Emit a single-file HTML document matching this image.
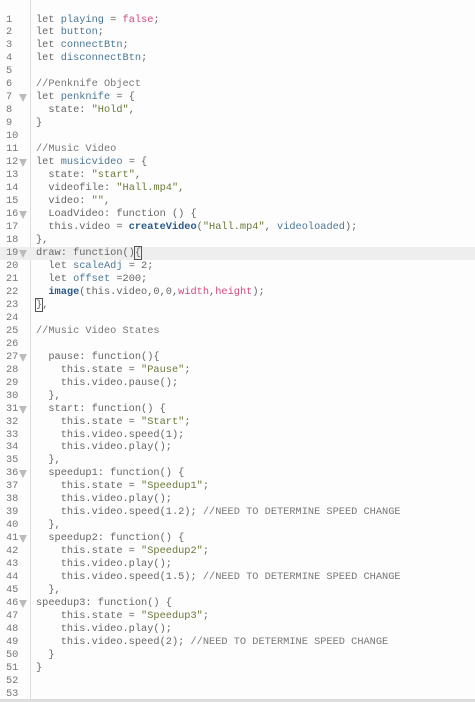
<!DOCTYPE html><html><head><style>
body{margin:0;width:475px;height:702px;overflow:hidden;background:#fdfdfd;font-family:"Liberation Mono",monospace;font-size:10.3px;color:#666;}
#g{position:absolute;left:0;top:0;width:30px;height:699px;border-right:1px solid #ddd;}
#c{position:absolute;top:13.5px;left:0;width:475px}
.l{height:12.98px;line-height:13px;white-space:pre;position:relative}
.n{position:absolute;left:6px;color:#777}
.t{position:absolute;left:36px}
.f{position:absolute;left:19px;top:3px;width:0;height:0;border-left:4.5px solid transparent;border-right:4.5px solid transparent;border-top:8px solid #bbb}
.hl{background:#eee}
.v{color:#4a7896}.p{color:#d04a80}.s{color:#6a7a3a}.b{color:#2a5a8a;font-weight:bold}.m{color:#777}
.bx{outline:1px solid #555}
#bot{position:absolute;left:0;top:699px;width:475px;height:3px;background:#ddd}
</style></head><body><div id="g"></div><div id="c">
<div class="l"><span class="n">1</span><span class="t">let <span class="v">playing</span> = <span class="p">false</span>;</span></div>
<div class="l"><span class="n">2</span><span class="t">let <span class="v">button</span>;</span></div>
<div class="l"><span class="n">3</span><span class="t">let <span class="v">connectBtn</span>;</span></div>
<div class="l"><span class="n">4</span><span class="t">let <span class="v">disconnectBtn</span>;</span></div>
<div class="l"><span class="n">5</span></div>
<div class="l"><span class="n">6</span><span class="t m">//Penknife Object</span></div>
<div class="l"><span class="n">7</span><span class="f"></span><span class="t">let <span class="v">penknife</span> = {</span></div>
<div class="l"><span class="n">8</span><span class="t">  state: <span class="s">"Hold"</span>,</span></div>
<div class="l"><span class="n">9</span><span class="t">}</span></div>
<div class="l"><span class="n">10</span></div>
<div class="l"><span class="n">11</span><span class="t m">//Music Video</span></div>
<div class="l"><span class="n">12</span><span class="f"></span><span class="t">let <span class="v">musicvideo</span> = {</span></div>
<div class="l"><span class="n">13</span><span class="t">  state: <span class="s">"start"</span>,</span></div>
<div class="l"><span class="n">14</span><span class="t">  videofile: <span class="s">"Hall.mp4"</span>,</span></div>
<div class="l"><span class="n">15</span><span class="t">  video: <span class="s">""</span>,</span></div>
<div class="l"><span class="n">16</span><span class="f"></span><span class="t">  LoadVideo: function () {</span></div>
<div class="l"><span class="n">17</span><span class="t">  this.video = <span class="b">createVideo</span>(<span class="s">"Hall.mp4"</span>, <span class="v">videoloaded</span>);</span></div>
<div class="l"><span class="n">18</span><span class="t">},</span></div>
<div class="l hl"><span class="n">19</span><span class="f"></span><span class="t">draw: function()<span class="bx">{</span></span></div>
<div class="l"><span class="n">20</span><span class="t">  let <span class="v">scaleAdj</span> = 2;</span></div>
<div class="l"><span class="n">21</span><span class="t">  let <span class="v">offset</span> =200;</span></div>
<div class="l"><span class="n">22</span><span class="t">  <span class="b">image</span>(this.video,0,0,<span class="p">width</span>,<span class="p">height</span>);</span></div>
<div class="l"><span class="n">23</span><span class="t"><span class="bx">}</span>,</span></div>
<div class="l"><span class="n">24</span></div>
<div class="l"><span class="n">25</span><span class="t m">//Music Video States</span></div>
<div class="l"><span class="n">26</span></div>
<div class="l"><span class="n">27</span><span class="f"></span><span class="t">  pause: function(){</span></div>
<div class="l"><span class="n">28</span><span class="t">    this.state = <span class="s">"Pause"</span>;</span></div>
<div class="l"><span class="n">29</span><span class="t">    this.video.pause();</span></div>
<div class="l"><span class="n">30</span><span class="t">  },</span></div>
<div class="l"><span class="n">31</span><span class="f"></span><span class="t">  start: function() {</span></div>
<div class="l"><span class="n">32</span><span class="t">    this.state = <span class="s">"Start"</span>;</span></div>
<div class="l"><span class="n">33</span><span class="t">    this.video.speed(1);</span></div>
<div class="l"><span class="n">34</span><span class="t">    this.video.play();</span></div>
<div class="l"><span class="n">35</span><span class="t">  },</span></div>
<div class="l"><span class="n">36</span><span class="f"></span><span class="t">  speedup1: function() {</span></div>
<div class="l"><span class="n">37</span><span class="t">    this.state = <span class="s">"Speedup1"</span>;</span></div>
<div class="l"><span class="n">38</span><span class="t">    this.video.play();</span></div>
<div class="l"><span class="n">39</span><span class="t">    this.video.speed(1.2); <span class="m">//NEED TO DETERMINE SPEED CHANGE</span></span></div>
<div class="l"><span class="n">40</span><span class="t">  },</span></div>
<div class="l"><span class="n">41</span><span class="f"></span><span class="t">  speedup2: function() {</span></div>
<div class="l"><span class="n">42</span><span class="t">    this.state = <span class="s">"Speedup2"</span>;</span></div>
<div class="l"><span class="n">43</span><span class="t">    this.video.play();</span></div>
<div class="l"><span class="n">44</span><span class="t">    this.video.speed(1.5); <span class="m">//NEED TO DETERMINE SPEED CHANGE</span></span></div>
<div class="l"><span class="n">45</span><span class="t">  },</span></div>
<div class="l"><span class="n">46</span><span class="f"></span><span class="t">speedup3: function() {</span></div>
<div class="l"><span class="n">47</span><span class="t">    this.state = <span class="s">"Speedup3"</span>;</span></div>
<div class="l"><span class="n">48</span><span class="t">    this.video.play();</span></div>
<div class="l"><span class="n">49</span><span class="t">    this.video.speed(2); <span class="m">//NEED TO DETERMINE SPEED CHANGE</span></span></div>
<div class="l"><span class="n">50</span><span class="t">  }</span></div>
<div class="l"><span class="n">51</span><span class="t">}</span></div>
<div class="l"><span class="n">52</span></div>
<div class="l"><span class="n">53</span></div>
</div><div id="bot"></div></body></html>
